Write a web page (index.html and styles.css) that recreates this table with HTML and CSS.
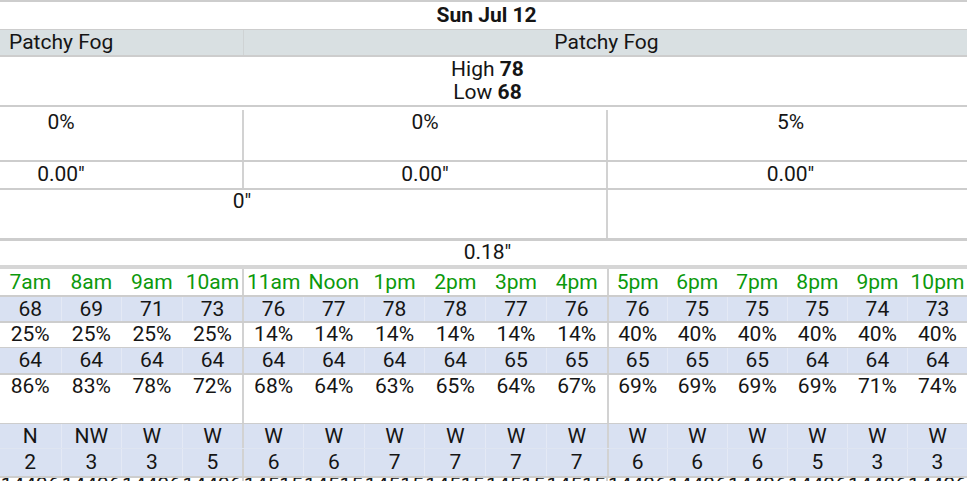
FILE: index.html
```html
<!DOCTYPE html>
<html lang="en">
<head>
<meta charset="utf-8">
<title>Forecast Sun Jul 12</title>
<link rel="stylesheet" href="styles.css">
</head>
<body>
<div class="forecast">
  <div class="row title">Sun Jul 12</div>
  <div class="row cond">
    <div class="cond-left">Patchy Fog</div>
    <div class="cond-right">Patchy Fog</div>
  </div>
  <div class="row hilo">
    <div>High <b>78</b></div>
    <div>Low <b>68</b></div>
  </div>
  <div class="row three pop">
    <div class="cell first">0%</div>
    <div class="cell sep">0%</div>
    <div class="cell sep">5%</div>
  </div>
  <div class="row three qpf">
    <div class="cell first">0.00"</div>
    <div class="cell sep">0.00"</div>
    <div class="cell sep">0.00"</div>
  </div>
  <div class="row two snow">
    <div class="cell snow-left">0"</div>
    <div class="cell sep"></div>
  </div>
  <div class="row total">0.18"</div>

  <div class="row hours hour-row">
    <div>7am</div><div>8am</div><div>9am</div><div>10am</div>
    <div class="sep">11am</div><div>Noon</div><div>1pm</div><div>2pm</div><div>3pm</div><div>4pm</div>
    <div class="sep">5pm</div><div>6pm</div><div>7pm</div><div>8pm</div><div>9pm</div><div>10pm</div>
  </div>
  <div class="row hours blue temp">
    <div>68</div><div>69</div><div>71</div><div>73</div>
    <div class="sep">76</div><div>77</div><div>78</div><div>78</div><div>77</div><div>76</div>
    <div class="sep">76</div><div>75</div><div>75</div><div>75</div><div>74</div><div>73</div>
  </div>
  <div class="row hours white sky">
    <div>25%</div><div>25%</div><div>25%</div><div>25%</div>
    <div class="sep">14%</div><div>14%</div><div>14%</div><div>14%</div><div>14%</div><div>14%</div>
    <div class="sep">40%</div><div>40%</div><div>40%</div><div>40%</div><div>40%</div><div>40%</div>
  </div>
  <div class="row hours blue dew">
    <div>64</div><div>64</div><div>64</div><div>64</div>
    <div class="sep">64</div><div>64</div><div>64</div><div>64</div><div>65</div><div>65</div>
    <div class="sep">65</div><div>65</div><div>65</div><div>64</div><div>64</div><div>64</div>
  </div>
  <div class="row hours white rh">
    <div>86%</div><div>83%</div><div>78%</div><div>72%</div>
    <div class="sep">68%</div><div>64%</div><div>63%</div><div>65%</div><div>64%</div><div>67%</div>
    <div class="sep">69%</div><div>69%</div><div>69%</div><div>69%</div><div>71%</div><div>74%</div>
  </div>
  <div class="row hours blue wdir">
    <div>N</div><div>NW</div><div>W</div><div>W</div>
    <div class="sep">W</div><div>W</div><div>W</div><div>W</div><div>W</div><div>W</div>
    <div class="sep">W</div><div>W</div><div>W</div><div>W</div><div>W</div><div>W</div>
  </div>
  <div class="row hours blue wspd">
    <div>2</div><div>3</div><div>3</div><div>5</div>
    <div class="sep">6</div><div>6</div><div>7</div><div>7</div><div>7</div><div>7</div>
    <div class="sep">6</div><div>6</div><div>6</div><div>5</div><div>3</div><div>3</div>
  </div>
  <div class="row hours white cut">
    <div>14436</div><div>14436</div><div>14436</div><div>14436</div>
    <div class="sep">14515</div><div>14515</div><div>14515</div><div>14515</div><div>14515</div><div>14515</div>
    <div class="sep">14436</div><div>14436</div><div>14436</div><div>14436</div><div>14436</div><div>14436</div>
  </div>
</div>
</body>
</html>
```

FILE: styles.css
```css
* { box-sizing: border-box; }

html, body {
  margin: 0;
  padding: 0;
  background: #ffffff;
  overflow: hidden;
}

body {
  width: 967px;
  height: 481px;
  font-family: Roboto, "Noto Sans", "Liberation Sans", sans-serif;
  font-size: 21px;
  color: #151515;
}

.forecast {
  width: 967px;
}

.row {
  border-top: 2px solid #cdcdcd;
}

.title {
  height: 29px;
  line-height: 27px;
  text-align: center;
  font-weight: 700;
  padding-left: 6px;
}

.cond {
  display: grid;
  grid-template-columns: 243px 1fr;
  height: 26px;
  border-top-width: 1px;
  background: #d9e0e2;
  line-height: 25px;
}

.cond-left {
  text-align: left;
  padding-left: 9px;
}

.cond-right {
  text-align: center;
  padding-left: 2px;
  border-left: 1px solid #cfd3d4;
}

.hilo {
  height: 50px;
  line-height: 23px;
  text-align: center;
  padding-left: 8px;
  padding-top: 1px;
}

.hilo b {
  font-weight: 700;
}

.three {
  display: grid;
  grid-template-columns: 242px 364px 1fr;
}

.two {
  display: grid;
  grid-template-columns: 606px 1fr;
}

.cell {
  text-align: center;
}

.cell.sep {
  border-left: 2px solid #d2d2d2;
}

.three .first {
  padding-right: 120px;
}

.pop {
  height: 55px;
  line-height: 25px;
  padding-top: 3px;
}

.pop .cell:last-child {
  padding-left: 6px;
}

.qpf {
  height: 28px;
  line-height: 25px;
}

.qpf .cell:last-child {
  padding-left: 6px;
}

.snow {
  height: 50px;
  line-height: 22px;
}

.snow-left {
  padding-right: 122px;
}

.total {
  height: 27px;
  border-top-width: 3px;
  line-height: 23px;
  text-align: center;
  padding-left: 8px;
}

.hours {
  display: grid;
  grid-template-columns: repeat(4, 60.5fr) repeat(6, 60.67fr) repeat(6, 60fr);
  text-align: center;
}

.hours > div {
  border-left: 1px solid transparent;
}

.hours > div:first-child {
  border-left: 0;
}

.hours > div.sep {
  border-left: 2px solid #d2d2d2;
}

.hour-row {
  height: 30px;
  border-top: 4px solid #d6d6d6;
  line-height: 26px;
  color: #0c990c;
}

.blue {
  background: #d9e1f2;
}

.blue > div {
  border-left-color: #e4e9f5;
}

.temp {
  height: 26px;
  line-height: 24px;
}

.sky {
  height: 26px;
  line-height: 23px;
}

.dew {
  height: 26px;
  border-top-width: 1px;
  line-height: 25px;
}

.rh {
  height: 50px;
  line-height: 22px;
}

.wdir {
  height: 25px;
  border-top-width: 1px;
  line-height: 24px;
}

.wspd {
  height: 28px;
  border-top: 1px solid #dfe5f1;
  line-height: 27px;
}

.cut {
  height: 20px;
  line-height: 14px;
  overflow: hidden;
}
```
